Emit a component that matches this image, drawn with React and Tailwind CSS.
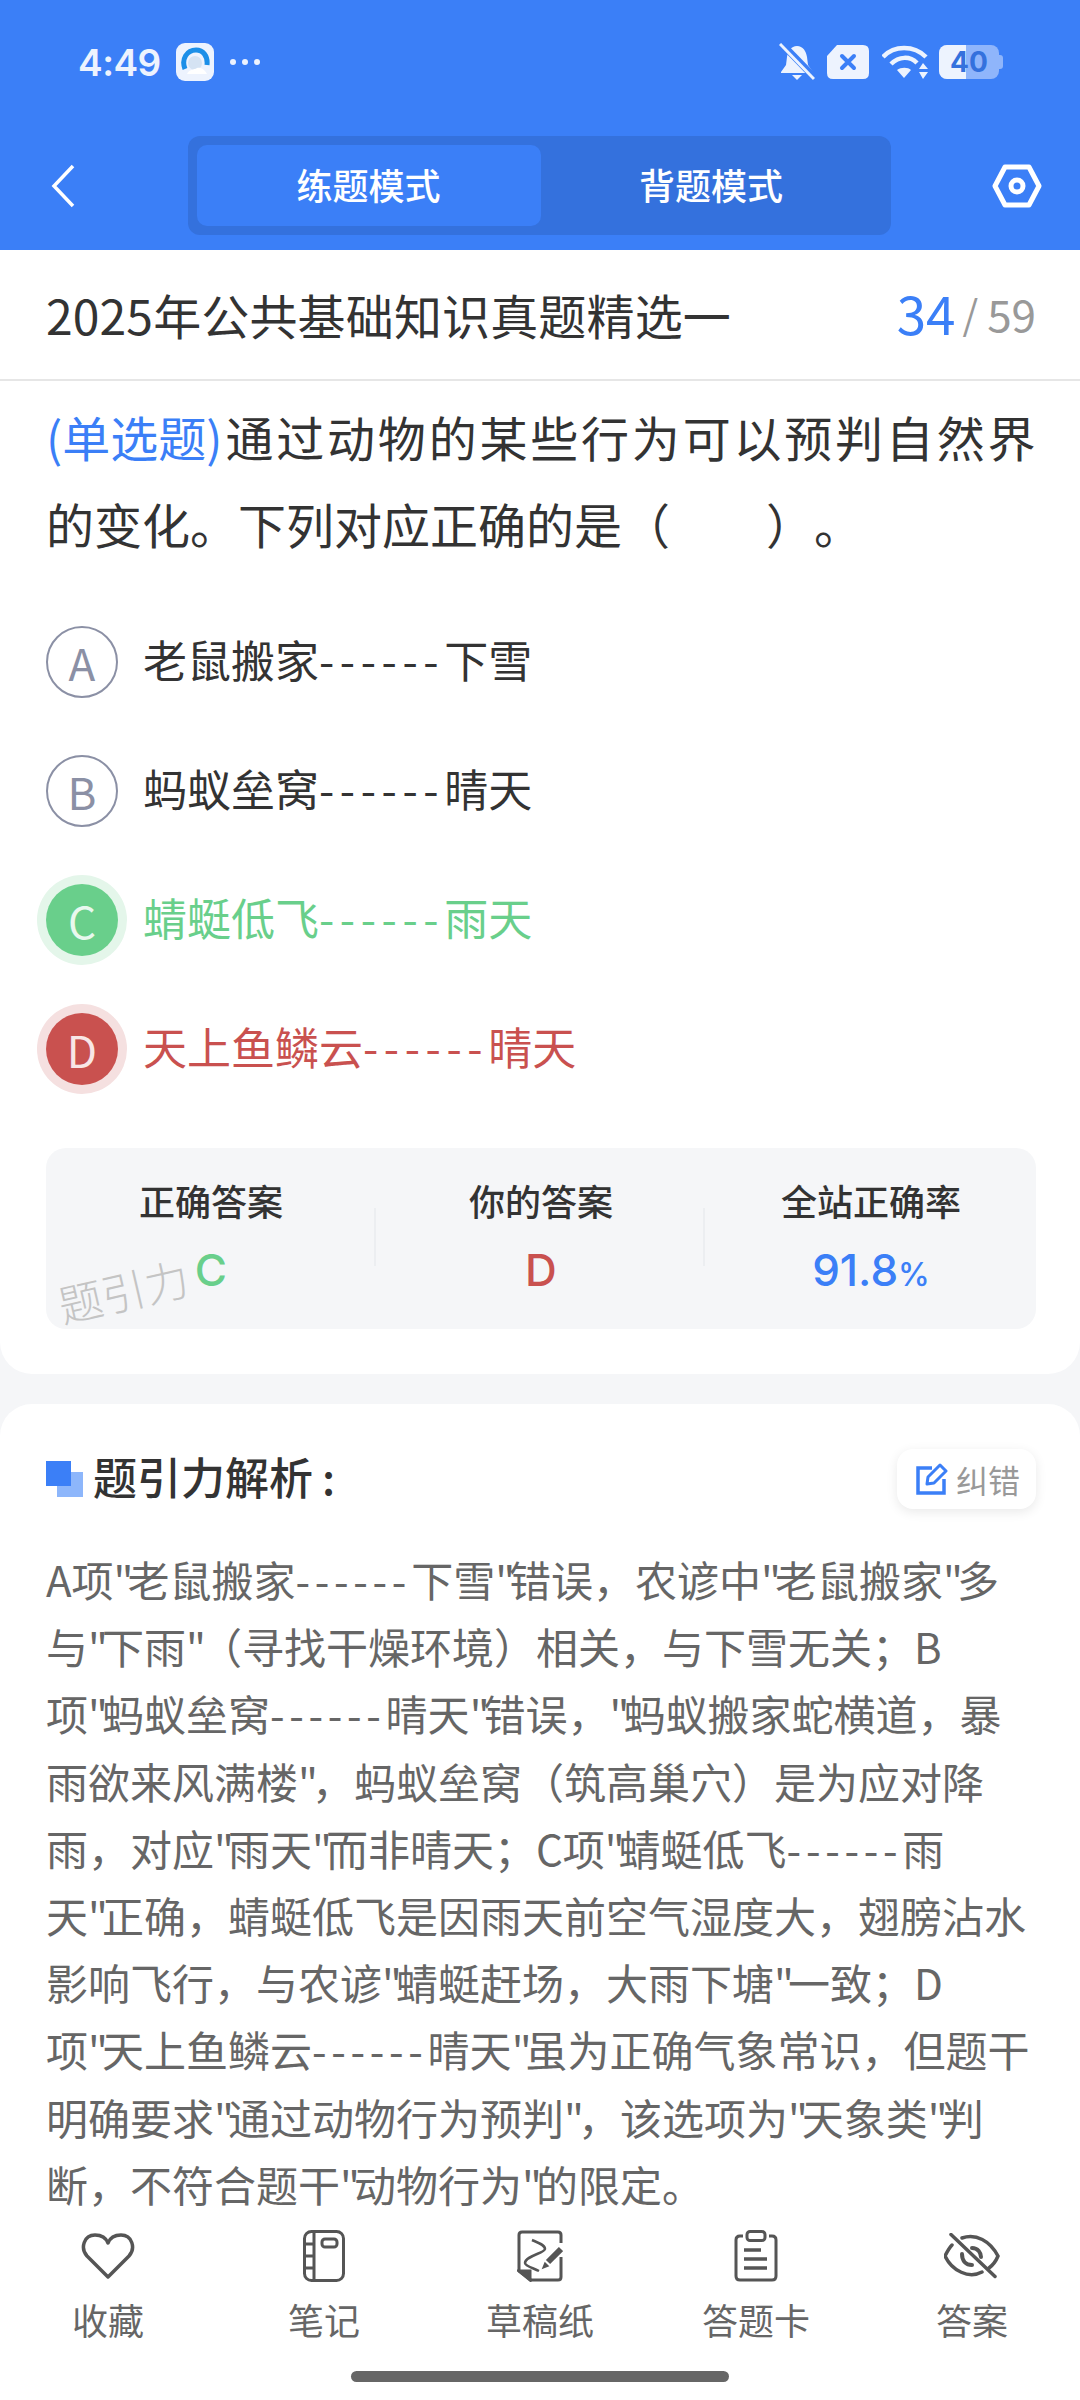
const CJK = "font-['Noto_Sans_CJK_SC','Noto_Sans',sans-serif]";

const OPTIONS = [
  { key: 'A', text: '老鼠搬家------下雪', state: 'idle' },
  { key: 'B', text: '蚂蚁垒窝------晴天', state: 'idle' },
  { key: 'C', text: '蜻蜓低飞------雨天', state: 'right' },
  { key: 'D', text: '天上鱼鳞云------晴天', state: 'wrong' },
];

const ANALYSIS = [
  'A项"老鼠搬家------下雪"错误，农谚中"老鼠搬家"多',
  '与"下雨"（寻找干燥环境）相关，与下雪无关；B',
  '项"蚂蚁垒窝------晴天"错误，"蚂蚁搬家蛇横道，暴',
  '雨欲来风满楼"，蚂蚁垒窝（筑高巢穴）是为应对降',
  '雨，对应"雨天"而非晴天；C项"蜻蜓低飞------雨',
  '天"正确，蜻蜓低飞是因雨天前空气湿度大，翅膀沾水',
  '影响飞行，与农谚"蜻蜓赶场，大雨下塘"一致；D',
  '项"天上鱼鳞云------晴天"虽为正确气象常识，但题干',
  '明确要求"通过动物行为预判"，该选项为"天象类"判',
  '断，不符合题干"动物行为"的限定。',
];

// the dashes are wider in the reference font than in Noto
function Dashed({ text, dashClass }) {
  const parts = text.split('------');
  if (parts.length === 1) return text;
  return <>{parts[0]}<span className={dashClass}>------</span>{parts[1]}</>;
}

// dashes wider, straight quotes narrower than Noto's
function AnalysisLine({ text }) {
  return text.split(/("|------)/).map((part, i) => {
    if (part === '"') return <span key={i} className="tracking-[-6px]">"</span>;
    if (part === '------') return <span key={i} className="tracking-[4.700px]">------</span>;
    return part;
  });
}

function Heart() {
  return (
    <svg width="54" height="48" viewBox="0 0 54 48" fill="none" stroke="#555" strokeWidth="3.5" strokeLinejoin="round">
      <path d="M27 45L6 24C-1 16 3 3 14 3C20 3 25 6 27 11C29 6 34 3 40 3C51 3 55 16 48 24Z" />
    </svg>
  );
}

function Notebook() {
  return (
    <svg width="42" height="52" viewBox="0 0 42 52" fill="none" stroke="#555" strokeWidth="3">
      <rect x="1.500" y="1.500" width="39" height="49" rx="7" />
      <path d="M11 2V50M2 14H11M2 26H11M2 38H11" />
      <rect x="19" y="9" width="15" height="8" rx="3" />
    </svg>
  );
}

function Draft() {
  return (
    <svg width="46" height="52" viewBox="0 0 46 52" fill="none" stroke="#555" strokeWidth="3">
      <path d="M14 50H41Q44 50 44 47V27M44 13V5Q44 2 41 2H5Q2 2 2 5V41L14 50" strokeLinejoin="round" />
      <path d="M2 41H13V50Z" fill="#555" />
      <path d="M15 10C22 13 28 15 28 19C28 23 8 26 8 33C8 36 16 38 22 41" strokeWidth="2.500" />
      <path d="M44 19L31 32" strokeWidth="6" />
      <path d="M28 33L26 38L31 36Z" fill="#555" strokeWidth="1.500" />
    </svg>
  );
}

function AnswerCard() {
  return (
    <svg width="44" height="52" viewBox="0 0 44 52" fill="none" stroke="#555" strokeWidth="3">
      <path d="M9 6H6Q2 6 2 10V46Q2 50 6 50H38Q42 50 42 46V10Q42 6 38 6H35" />
      <rect x="13" y="1.500" width="18" height="9" rx="3" />
      <path d="M10 20H27M10 29H33M10 38H33" strokeWidth="3.500" />
    </svg>
  );
}

function EyeOff() {
  return (
    <svg width="56" height="46" viewBox="0 0 56 46" fill="none" stroke="#555" strokeWidth="3.500" strokeLinecap="round">
      <path d="M7 1.500L51 43.500" />
      <path d="M18 5C32 0 46 8 54 23C52 28 49 32 45 35" />
      <path d="M38 39C25 46 8 38 1 23C3 19 5 15 8 12" />
      <path d="M28 15C34 15 37 20 37 24" strokeWidth="4" />
      <path d="M18 21C18 28 22 32 28 32" strokeWidth="4" />
    </svg>
  );
}

function StatusIcons() {
  return (
    <div className="flex items-center">
      <svg width="36" height="38" viewBox="0 0 36 38" fill="#edf3fe">
        <path d="M18 3C12 3 9 8 8 14L7 22L2 29V30H34V29L29 22L28 14C27 8 24 3 18 3Z" />
        <path d="M13 32H23L18 37Z" />
        <path d="M1 -1L36 35" stroke="#3b7ff7" strokeWidth="7" />
        <path d="M1 1L35 36" stroke="#edf3fe" strokeWidth="3" />
      </svg>
      <svg className="ml-[12px]" width="42" height="34" viewBox="0 0 42 34" fill="#edf3fe">
        <path d="M10 0H36Q42 0 42 6V28Q42 34 36 34H6Q0 34 0 28V11Z" />
        <path d="M15 11L27 23M27 11L15 23" stroke="#3b7ff7" strokeWidth="4" strokeLinecap="round" />
      </svg>
      <svg className="ml-[13px]" width="46" height="34" viewBox="0 0 46 34" fill="none" stroke="#edf3fe" strokeWidth="4.500">
        <path d="M1 12C12 0 32 0 44 12" />
        <path d="M9 19C17 11 28 11 35 18" />
        <path d="M15 25C19 22 26 22 29 25L22 33Z" fill="#edf3fe" stroke="none" />
        <path d="M41 18L46 24H37ZM41 34L46 27H37Z" fill="#edf3fe" stroke="none" />
      </svg>
      <div className="relative ml-[11px] w-[60px] h-[34px] rounded-[8px] bg-[#8fb5fb] overflow-hidden flex items-center justify-center">
        <div className="absolute left-0 top-0 bottom-0 w-[27px] bg-[#edf3fe]" />
        <span className="relative font-['Inter',sans-serif] font-bold text-[28px] text-[#3471dd] leading-none">40</span>
      </div>
      <div className="w-[4px] h-[14px] rounded-r-[3px] bg-[#8fb5fb]" />
    </div>
  );
}

export default function App() {
  return (
    <div className={`relative w-[1080px] h-[2400px] overflow-hidden bg-[#f5f6f8] ${CJK}`}>
      {/* blue header */}
      <div className="h-[250px] bg-[#3b7ff7] text-white">
        <div className="h-[136px] pt-[40px] pl-[78px] pr-[77px] flex items-start justify-between">
          <div className="flex items-center h-[44px]">
            <span className="font-['Inter',sans-serif] font-semibold text-[37px] text-[#edf3fe] tracking-[-0.5px] pt-[2px]">4:49</span>
            <div className="ml-[15px] w-[38px] h-[38px] rounded-[9px] bg-[#edf3fe] flex items-center justify-center">
              <svg width="30" height="30" viewBox="0 0 30 30" fill="none">
                <path d="M5 22C1 12 7 3 16 3C23 3 28 9 27 18" stroke="#1c8fe8" strokeWidth="5" />
                <circle cx="15" cy="16" r="7" fill="#d5e3f3" />
                <path d="M7 27C9 22 14 23 17 21C21 20 25 23 27 27Z" fill="#fff" />
              </svg>
            </div>
            <div className="ml-[16px] flex gap-[6px]">
              <span className="w-[6px] h-[6px] rounded-full bg-[#edf3fe]" />
              <span className="w-[6px] h-[6px] rounded-full bg-[#edf3fe]" />
              <span className="w-[6px] h-[6px] rounded-full bg-[#edf3fe]" />
            </div>
          </div>
          <div className="h-[44px] flex items-center"><StatusIcons /></div>
        </div>
        <div className="h-[99px] flex items-center justify-between pl-[50px] pr-[38px]">
          <svg width="26" height="44" viewBox="0 0 26 44" fill="none" stroke="#fff" strokeWidth="3.500"><path d="M23 2L4 22L23 42" /></svg>
          <div className="w-[703px] h-[99px] ml-[10px] p-[9px] rounded-[12px] bg-[#3471dd] flex text-[36px] font-medium">
            <div className="w-[344px] pb-[4px] rounded-[10px] bg-[#3b7ff7] flex items-center justify-center">练题模式</div>
            <div className="flex-1 pb-[4px] flex items-center justify-center">背题模式</div>
          </div>
          <svg width="50" height="44" viewBox="0 0 50 44" fill="none" stroke="#fff" strokeWidth="5" strokeLinejoin="round">
            <path d="M13 3H37L47 22L37 41H13L3 22Z" />
            <circle cx="25" cy="22" r="6" />
          </svg>
        </div>
      </div>

      {/* question card */}
      <div className="h-[1124px] bg-white rounded-b-[32px]">
        <div className="h-[131px] pl-[46px] pr-[44px] pb-[2px] flex items-center justify-between border-b-2 border-[#e6e6e6]">
          <span className="text-[48px] text-[#333] tracking-[0.15px]">2025年公共基础知识真题精选一</span>
          <span className="flex items-center pb-[2px]">
            <span className="text-[53px] text-[#3b7ff7]">34</span>
            <span className="text-[40px] text-[#999] ml-[7px] mr-[9px]">/</span>
            <span className="text-[44px] text-[#999]">59</span>
          </span>
        </div>
        <div className="px-[46px] pt-[12px] text-[48px] leading-[87px] text-[#333]">
          <div className="whitespace-nowrap tracking-[2.800px]"><span className="text-[#3b7ff7] tracking-normal mr-[3px]">(单选题)</span>通过动物的某些行为可以预判自然界</div>
          <div className="whitespace-nowrap [text-spacing-trim:space-all]">的变化。下列对应正确的是（　　）。</div>
        </div>
        <div className="mt-[59px] px-[46px] flex flex-col gap-[57px]">
          {OPTIONS.map(o => (
            <div key={o.key} className="flex items-center h-[72px]">
              {o.state === 'idle' && (
                <div className="w-[72px] h-[72px] rounded-full border-2 border-[#8b90a5] text-[#8b90a5] flex items-center justify-center text-[44px]">{o.key}</div>
              )}
              {o.state === 'right' && (
                <div className="w-[72px] h-[72px] rounded-full bg-[#69cf8b] ring-[9px] ring-[#e4f6ea] text-[#e8f8ee] flex items-center justify-center text-[44px]">{o.key}</div>
              )}
              {o.state === 'wrong' && (
                <div className="w-[72px] h-[72px] rounded-full bg-[#c9514f] ring-[9px] ring-[#f5e0e0] text-[#f8e6e6] flex items-center justify-center text-[44px]">{o.key}</div>
              )}
              <span className={`ml-[25px] pb-[6px] text-[44px] ${o.state === 'right' ? 'text-[#69cf8b]' : o.state === 'wrong' ? 'text-[#c9514f]' : 'text-[#333]'}`}>
                <Dashed text={o.text} dashClass="tracking-[5.600px]" />
              </span>
            </div>
          ))}
        </div>
        <div className="relative mt-[63px] ml-[46px] mr-[44px] h-[181px] rounded-[20px] bg-[#f5f6f8] grid grid-cols-3">
          <div className="flex flex-col items-center pt-[30px]">
            <span className="text-[36px] leading-[44px] font-medium text-[#333]">正确答案</span>
            <span className="mt-[22px] font-['Inter',sans-serif] text-[44px] leading-[52px] font-medium text-[#69cf8b]">C</span>
          </div>
          <div className="flex flex-col items-center pt-[30px]">
            <span className="text-[36px] leading-[44px] font-medium text-[#333]">你的答案</span>
            <span className="mt-[22px] font-['Inter',sans-serif] text-[44px] leading-[52px] font-medium text-[#c9514f]">D</span>
          </div>
          <div className="flex flex-col items-center pt-[30px]">
            <span className="text-[36px] leading-[44px] font-medium text-[#333]">全站正确率</span>
            <span className="mt-[22px] font-['Inter',sans-serif] text-[44px] leading-[52px] font-medium text-[#3b7ff7]">91.8<span className="text-[32px]">%</span></span>
          </div>
          <div className="absolute left-[328px] top-[60px] h-[58px] w-[2px] bg-[#eceef1]" />
          <div className="absolute left-[657px] top-[60px] h-[58px] w-[2px] bg-[#eceef1]" />
          <span className="absolute left-[11px] top-[116px] text-[44px] leading-[52px] font-light text-[#c4c4c4] -rotate-[13deg]">题引力</span>
        </div>
      </div>

      {/* analysis card */}
      <div className="mt-[30px] h-[1000px] bg-white rounded-t-[32px] pl-[46px] pr-[44px]">
        <div className="flex items-center justify-between pt-[45px]">
          <div className="flex items-center h-[60px]">
            <div className="relative w-[37px] h-[36px]">
              <div className="absolute right-0 bottom-0 w-[26px] h-[25px] bg-[#8db6fb]" />
              <div className="absolute left-0 top-0 w-[25px] h-[25px] bg-[#3b7ff7]" />
            </div>
            <span className="ml-[10px] pb-[6px] text-[44px] leading-[60px] font-medium text-[#333]">题引力解析<span className="ml-[9px]">:</span></span>
          </div>
          <div className="w-[139px] h-[60px] pl-[3px] rounded-[16px] bg-white shadow-[0_3px_12px_rgba(0,0,0,0.09)] flex items-center justify-center gap-[8px]">
            <svg width="32" height="32" viewBox="0 0 32 32" fill="none" stroke="#3b7ff7" strokeWidth="3.500">
              <path d="M16 5H2V30H28V16" />
              <path d="M11 21L12 14L24 2L30 8L18 20Z" strokeLinejoin="round" strokeWidth="3" />
            </svg>
            <span className="text-[32px] text-[#999]">纠错</span>
          </div>
        </div>
        <div className="mt-[36px] text-[42px] leading-[67.200px] text-[#666]">
          {ANALYSIS.map((line, i) => (
            <div key={i} className="whitespace-nowrap">
              <AnalysisLine text={line} />
            </div>
          ))}
        </div>
      </div>

      {/* bottom bar */}
      <div className="absolute left-0 right-0 bottom-0 h-[190px] bg-white">
        <div className="grid grid-cols-5 pt-[18px]">
          {[
            ['收藏', <Heart />],
            ['笔记', <Notebook />],
            ['草稿纸', <Draft />],
            ['答题卡', <AnswerCard />],
            ['答案', <EyeOff />],
          ].map(([label, icon]) => (
            <div key={label} className="flex flex-col items-center">
              <div className="h-[56px] flex items-center justify-center">{icon}</div>
              <span className="mt-[13px] text-[36px] leading-[44px] text-[#666]">{label}</span>
            </div>
          ))}
        </div>
        <div className="absolute left-[351px] bottom-[18px] w-[378px] h-[11px] rounded-full bg-[#666]" />
      </div>
    </div>
  );
}
